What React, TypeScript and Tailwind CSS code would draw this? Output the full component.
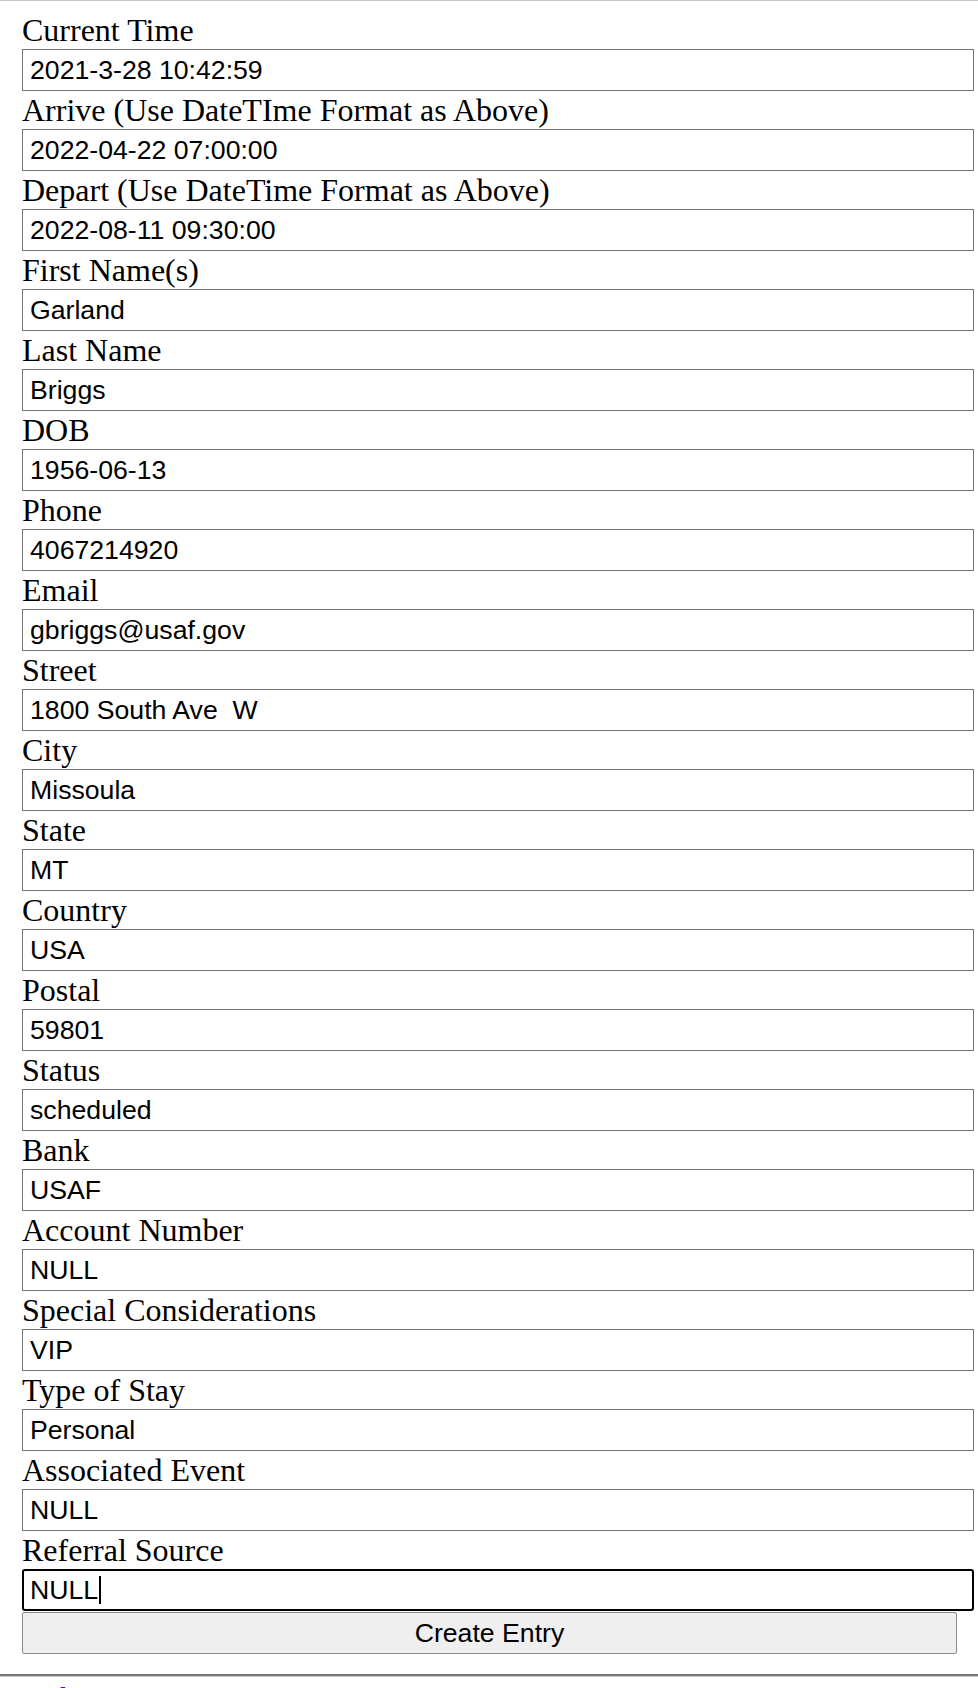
import React from 'react'

const fields: [string, string][] = [
  ['Current Time', '2021-3-28 10:42:59'],
  ['Arrive (Use DateTIme Format as Above)', '2022-04-22 07:00:00'],
  ['Depart (Use DateTime Format as Above)', '2022-08-11 09:30:00'],
  ['First Name(s)', 'Garland'],
  ['Last Name', 'Briggs'],
  ['DOB', '1956-06-13'],
  ['Phone', '4067214920'],
  ['Email', 'gbriggs@usaf.gov'],
  ['Street', '1800 South Ave  W'],
  ['City', 'Missoula'],
  ['State', 'MT'],
  ['Country', 'USA'],
  ['Postal', '59801'],
  ['Status', 'scheduled'],
  ['Bank', 'USAF'],
  ['Account Number', 'NULL'],
  ['Special Considerations', 'VIP'],
  ['Type of Stay', 'Personal'],
  ['Associated Event', 'NULL'],
]

export default function App() {
  return (
    <div className="bg-white min-h-[1688px] font-['Liberation_Serif',serif] text-black">
      <div className="h-px bg-[#c4c4c4]" />
      <form className="flex flex-col pt-[10px] pl-[22px] pr-[4px]" onSubmit={(e) => e.preventDefault()}>
        {fields.map(([label, value]) => (
          <div key={label} className="flex flex-col">
            <label className="block h-[38px] text-[32px] leading-[38px] whitespace-pre">{label}</label>
            <input
              readOnly
              value={value}
              className="block h-[42px] w-[952px] border border-[#767676] bg-white pl-[7px] font-['Liberation_Sans',Arial,sans-serif] text-[26.67px] leading-[40px] text-black outline-none whitespace-pre"
            />
          </div>
        ))}
        <label className="block h-[38px] text-[32px] leading-[38px]">Referral Source</label>
        <div className="flex h-[42px] w-[952px] items-center rounded-[3px] border-2 border-black bg-white pl-[6px] font-['Liberation_Sans',Arial,sans-serif] text-[26.67px] leading-[38px]">
          <span>NULL</span>
          <span className="ml-px h-[28px] w-[2px] bg-black" />
        </div>
        <button
          type="submit"
          className="mt-px h-[42px] w-[935px] rounded-[2px] border border-[#8a8a8a] bg-[#efefef] font-['Liberation_Sans',Arial,sans-serif] text-[26.67px] leading-[40px] text-black"
        >
          Create Entry
        </button>
      </form>
      <div className="mt-[20px] border-t-2 border-b border-t-[#7a7a7a] border-b-[#c4c4c4]" />
      <div className="pl-[10px] pt-[2px] text-[32px] leading-[38px] text-[#551a8b] underline">
        <a href="#">Back to Main Menu</a>
      </div>
    </div>
  )
}
